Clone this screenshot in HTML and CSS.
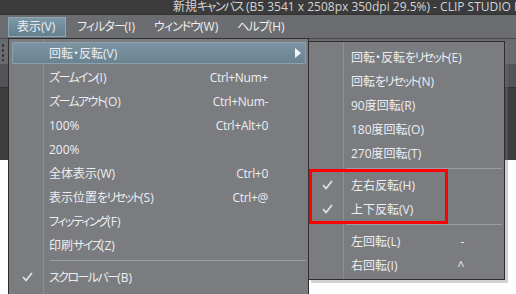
FILE: index.html
```html
<!DOCTYPE html>
<html lang="ja">
<head>
    <meta charset="UTF-8">
    <title>CLIP STUDIO PAINT - 表示メニュー</title>
    <link rel="stylesheet" href="styles.css">
</head>
<body>
    <div class="titlebar">新規<span class="kn">キャンバス</span> (B5 3541 x 2508px 350dpi 29.5%)  - CLIP STUDIO PAINT PRO</div>

    <nav class="menubar">
        <span class="menubar-item activo">表示(V)</span>
        <span class="menubar-item"><span class="kn">フィルター</span>(I)</span>
        <span class="menubar-item"><span class="kn">ウィンドウ</span>(W)</span>
        <span class="menubar-item"><span class="kn">ヘルプ</span>(H)</span>
    </nav>

    <div class="workspace">
        <div class="toolbar"><span class="grip"></span></div>
        <div class="tabstrip"></div>
        <div class="darkarea"></div>
        <div class="canvas"></div>
    </div>

    <!-- Menú principal: 表示 -->
    <div class="menu menu-main">
        <div class="item sel">
            <span class="check"></span>
            <span class="label">回転・反転(V)</span>
            <span class="arrow"></span>
        </div>
        <div class="item"><span class="check"></span><span class="label"><span class="kn">ズームイン</span>(I)</span><span class="key">Ctrl+Num+</span></div>
        <div class="item"><span class="check"></span><span class="label"><span class="kn">ズームアウト</span>(O)</span><span class="key">Ctrl+Num-</span></div>
        <div class="item"><span class="check"></span><span class="label">100%</span><span class="key">Ctrl+Alt+0</span></div>
        <div class="item"><span class="check"></span><span class="label">200%</span><span class="key"></span></div>
        <div class="item"><span class="check"></span><span class="label">全体表示(W)</span><span class="key">Ctrl+0</span></div>
        <div class="item"><span class="check"></span><span class="label">表示位置<span class="kn">をリセット</span>(S)</span><span class="key">Ctrl+@</span></div>
        <div class="item"><span class="check"></span><span class="label"><span class="kn">フィッティング</span>(F)</span><span class="key"></span></div>
        <div class="item"><span class="check"></span><span class="label">印刷<span class="kn">サイズ</span>(Z)</span><span class="key"></span></div>
        <div class="sep"></div>
        <div class="item">
            <span class="check"><svg width="11" height="10" viewBox="0 0 11 10"><polyline points="1,5 4,8.5 10,1" fill="none" stroke="#e6e7ea" stroke-width="1.6"/></svg></span>
            <span class="label"><span class="kn">スクロールバー</span>(B)</span><span class="key"></span>
        </div>
    </div>

    <!-- Submenú: 回転・反転 -->
    <div class="menu menu-sub">
        <div class="item"><span class="check"></span><span class="label">回転・反転<span class="kn">をリセット</span>(E)</span></div>
        <div class="item"><span class="check"></span><span class="label">回転<span class="kn">をリセット</span>(N)</span></div>
        <div class="item"><span class="check"></span><span class="label">90度回転(R)</span></div>
        <div class="item"><span class="check"></span><span class="label">180度回転(O)</span></div>
        <div class="item"><span class="check"></span><span class="label">270度回転(T)</span></div>
        <div class="sep"></div>
        <div class="item">
            <span class="check"><svg width="11" height="10" viewBox="0 0 11 10"><polyline points="1,5 4,8.5 10,1" fill="none" stroke="#e6e7ea" stroke-width="1.6"/></svg></span>
            <span class="label">左右反転(H)</span>
        </div>
        <div class="item">
            <span class="check"><svg width="11" height="10" viewBox="0 0 11 10"><polyline points="1,5 4,8.5 10,1" fill="none" stroke="#e6e7ea" stroke-width="1.6"/></svg></span>
            <span class="label">上下反転(V)</span>
        </div>
        <div class="sep"></div>
        <div class="item"><span class="check"></span><span class="label">左回転(L)</span><span class="key">-</span></div>
        <div class="item"><span class="check"></span><span class="label">右回転(I)</span><span class="key">^</span></div>
    </div>

    <!-- Marco rojo de resaltado -->
    <div class="marco"></div>
</body>
</html>
```

FILE: styles.css
```css
/* Captura del menú 表示 de CLIP STUDIO PAINT */
body {
    margin: 0;
    width: 516px;
    height: 294px;
    overflow: hidden;
    font-family: "Open Sans", "Noto Sans CJK JP", sans-serif;
    font-size: 12px;
    font-feature-settings: "palt";
    color: #eceef1;
    background-color: #3f3f40;
}

/* kana más estrechos, como Meiryo UI */
.kn {
    letter-spacing: -1.6px;
}

.titlebar {
    height: 14px;
    overflow: hidden;
    background-color: #3b3b3c;
    color: #d4d4d4;
    font-size: 12px;
    line-height: 14px;
    padding-left: 173px;
    white-space: nowrap;
    border-bottom: 1px solid #333;
}

.menubar {
    height: 22px;
    display: flex;
    align-items: center;
    padding: 1px 0 0 8px;
    background-color: #6c6d70;
    border-bottom: 1px solid #4a4a4c;
}

.menubar-item {
    height: 19px;
    line-height: 18px;
    padding: 0 9px;
    margin-right: 1px;
    white-space: nowrap;
}

.menubar-item .kn {
    letter-spacing: -1px;
}

.menubar-item.activo {
    background: linear-gradient(#7c98a7, #62808f);
    border: 1px solid #91a8b4;
    box-sizing: border-box;
    height: 20px;
    width: 58px;
    padding: 0 0 0 8px;
    margin-right: 2px;
}

.workspace {
    display: flex;
    flex-direction: column;
}

.toolbar {
    height: 25px;
    background-color: #6a6b6e;
}

.grip {
    display: block;
    width: 4px;
    height: 18px;
    margin: 4px 0 0 1px;
    background-image: radial-gradient(circle, #2c2c2c 1px, transparent 1.3px);
    background-size: 4px 5px;
}

.tabstrip {
    height: 23px;
    background-color: #545456;
    border-bottom: 1px solid #333;
}

.darkarea {
    height: 72px;
    background-color: #3e3e3f;
}

.canvas {
    height: 140px;
    background-color: #ffffff;
}

/* Menús desplegables */
.menu {
    position: absolute;
    background-color: #7b7c80;
    border: 1px solid #2e2e30;
    box-sizing: border-box;
    background-image: linear-gradient(#8d8e92, #8d8e92);
    background-repeat: no-repeat;
    background-size: 1px 100%;
}

.menu-main {
    left: 8px;
    top: 38px;
    width: 301px;
    height: 270px;
    padding: 2px 2px 0 3px;
    background-position: 34px 0;
}

.menu-sub {
    left: 308px;
    top: 41px;
    width: 197px;
    height: 239px;
    padding: 3px 2px 0 2px;
    background-position: 34px 0;
    box-shadow: 3px 3px 0 rgba(120, 120, 120, 0.35);
}

.item {
    height: 24px;
    display: flex;
    align-items: center;
    box-sizing: border-box;
}

.item.sel {
    height: 22px;
    margin: 1px 0;
    background: linear-gradient(#7d95a2, #6a8391);
    border: 1px solid #8ba2ad;
    border-radius: 1px;
}

.check {
    display: flex;
    flex-shrink: 0;
    box-sizing: border-box;
}

.menu-main .check {
    width: 37px;
    padding-left: 10px;
}

.menu-sub .check {
    width: 40px;
    padding-left: 11px;
}

.item.sel .check {
    width: 36px;
}

.label {
    flex: 1;
    white-space: nowrap;
}

.key {
    width: 100px;
    text-align: right;
    padding-right: 38px;
    box-sizing: border-box;
    white-space: nowrap;
    letter-spacing: -0.3px;
}

.menu-sub .key {
    width: 80px;
    padding-right: 38px;
}

.arrow {
    width: 0;
    height: 0;
    border-top: 5.5px solid transparent;
    border-bottom: 5.5px solid transparent;
    border-left: 6px solid #f4f5f7;
    margin-right: 4px;
}

.sep {
    height: 8px;
    margin-left: 38px;
    background-image: linear-gradient(#9c9da1, #9c9da1);
    background-repeat: no-repeat;
    background-size: 100% 1px;
    background-position: 0 3px;
}

.menu-sub .sep {
    margin-left: 35px;
}

.marco {
    position: absolute;
    left: 309px;
    top: 169px;
    width: 139px;
    height: 55px;
    border: 3px solid #ff0000;
    box-sizing: border-box;
}
```
